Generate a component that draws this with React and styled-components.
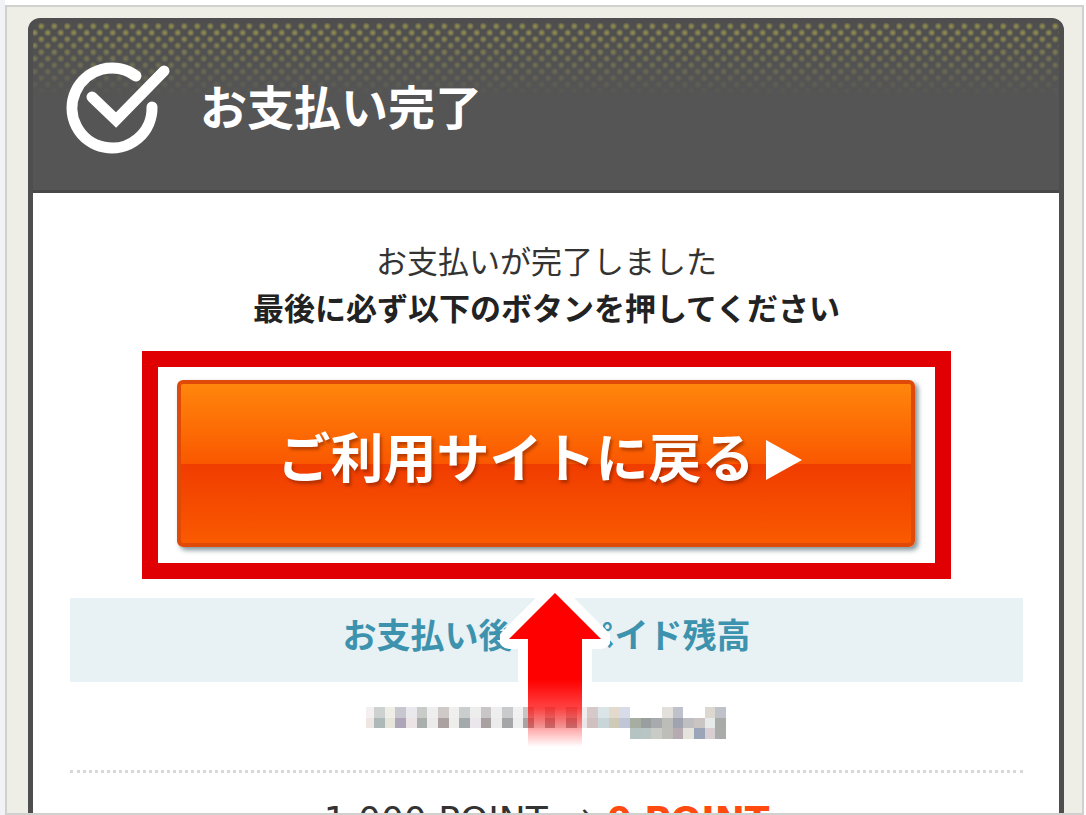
import React from 'react';
import styled, { createGlobalStyle } from 'styled-components';

const GlobalStyle = createGlobalStyle`
  * {
    box-sizing: border-box;
  }
  html {
    height: 100%;
  }
  body {
    margin: 0;
    height: 100%;
    background: #fff;
    font-family: "Liberation Sans", "Noto Sans CJK JP", sans-serif;
  }
  #root {
    height: 100%;
  }
`;

// masked account id, one string per cell row
const MASK_CELL = 11;
const MASK_ROWS = [
  ['#f4f0f0', '#cdd1d0', '#eeeee6', '#c8c6cf', '#e9e9ed', '#c9cbc9', '#eeeeee', '#cfcac8', '#efefee', '#cacecf', '#ededeb', '#c8c6c7', '#eeeeef', '#c9cacc', '#f1f1f1', '#c9c5c5', '#efefef', '#c9c5c5', '#efefef', '#c9c5c5', '#f1eded', '#d6c9c9', '#dbe5e8', '#e3dacd', '#d8dce8', '', '', '', '#e3e0dc', '#bfc2cb', '', '', '#dcd8d0', '#bfc2c8'],
  ['#efe5e2', '#adb8b8', '#e5e5da', '#aca6b8', '#ece3e4', '#a9afac', '#ebebeb', '#aaa1a0', '#ededec', '#a4a9ab', '#eae6ec', '#a9a0a1', '#ebebec', '#a5a6a8', '#eeeeee', '#a9a3a3', '#ebebeb', '#a9a3a3', '#ebebeb', '#a9a3a3', '#ece6e6', '#d1c0c0', '#c8d6d9', '#cfc9b8', '#c0c5d8', '#a6aea2', '#999e9e', '#a8abae', '#bcbcb8', '#a0a4b0', '#bfbfc1', '#cac4c2', '#e6eaea', '#a9aba9'],
  ['', '', '', '', '', '', '', '', '', '', '', '', '', '', '', '', '', '', '', '', '', '', '', '', '', '#b5c3c2', '#b9c5c3', '#c9cbc6', '#bebdb8', '#b6abb0', '#e4e4dd', '#9ba5b8', '#d9cfd2', '#aaaca9'],
];

function CheckIcon() {
  return (
    <svg width="108" height="96" viewBox="0 0 108 96" fill="none" stroke="#fff" strokeWidth="11" strokeLinecap="round">
      <path d="M73 17A40 40 0 1 0 89 48" />
      <path d="M29 38L53 61L101 12" strokeLinejoin="miter" />
    </svg>
  );
}

function PointerArrow() {
  return (
    <svg width="110" height="166" viewBox="0 0 110 166">
      <defs>
        <linearGradient id="arrowFade" x1="0" y1="0" x2="0" y2="160" gradientUnits="userSpaceOnUse">
          <stop offset="0.58" stopColor="#f00" />
          <stop offset="0.75" stopColor="#f00" stopOpacity="0.75" />
          <stop offset="1" stopColor="#f00" stopOpacity="0" />
        </linearGradient>
      </defs>
      <path d="M55 6L101 52H82V94H28V52H9Z" fill="#fff" stroke="#fff" strokeWidth="20" strokeLinejoin="round" />
      <path d="M55 6L101 52H82V160H28V52H9Z" fill="url(#arrowFade)" />
    </svg>
  );
}

function MaskedId() {
  return (
    <svg width="362" height="32" viewBox="5 0 369 33" role="img" aria-label="masked id" shapeRendering="crispEdges">
      {MASK_ROWS.map((row, y) =>
        row.map((color, x) =>
          color && (
            <rect key={`${x}-${y}`} x={x * MASK_CELL} y={y * MASK_CELL} width={MASK_CELL} height={MASK_CELL} fill={color} />
          )
        )
      )}
    </svg>
  );
}

function App() {
  return (
    <>
      <GlobalStyle />
      <Page>
        <Frame>
          <Panel>
            <Header>
              <CheckIcon />
              <Title>お支払い完了</Title>
            </Header>
            <Content>
              <Message>
                お支払いが完了しました
                <strong>最後に必ず以下のボタンを押してください</strong>
              </Message>
              <Highlight>
                <ReturnButton type="button">
                  ご利用サイトに戻る
                  <svg width="38" height="42" viewBox="0 0 38 42">
                    <path d="M1 1L37 21L1 41Z" fill="#fff" />
                  </svg>
                </ReturnButton>
                <Pointer>
                  <PointerArrow />
                </Pointer>
              </Highlight>
              <Balance>
                <BalanceTitle>お支払い後プリペイド残高</BalanceTitle>
                <BalanceId>
                  <MaskedId />
                </BalanceId>
                <BalancePoints>
                  1,000 POINT <span>→</span> <b>0 POINT</b>
                </BalancePoints>
              </Balance>
            </Content>
          </Panel>
        </Frame>
      </Page>
    </>
  );
}

const Page = styled.div`
  height: 100%;
  padding: 5px 2px 0 5px;
  background: linear-gradient(to right, #f1f2f5 5px, #fff 5px);
`;

const Frame = styled.div`
  height: 100%;
  padding: 11px 18px 0 21px;
  overflow: hidden;
  border: 2px solid #d0d1cf;
  background: #eeeee6;
`;

const Panel = styled.main`
  border: 5px solid #4e4e4e;
  border-radius: 12px 12px 0 0;
  background: #fff;
`;

const Header = styled.header`
  display: flex;
  align-items: center;
  gap: 29px;
  height: 170px;
  padding: 0 30px;
  border-bottom: 3px solid #484848;
  background:
    linear-gradient(to bottom, transparent 10px, #555 72px),
    radial-gradient(circle at 25% 25%, #8b8750 1px, transparent 4px) 5px 0 / 13px 13px,
    radial-gradient(circle at 75% 75%, #8b8750 1px, transparent 4px) 5px 0 / 13px 13px,
    #4f4f4f;
`;

const Title = styled.h1`
  margin: 0;
  padding-top: 5px;
  color: #fff;
  font-size: 47px;
  line-height: 56px;
  font-weight: 700;
`;

const Content = styled.div`
  padding: 46px 36px 0 37px;
`;

const Message = styled.p`
  margin: 0;
  color: #333;
  font-size: 31px;
  line-height: 47px;
  text-align: center;
  strong {
    display: block;
    color: #222;
    font-weight: 700;
  }
`;

const Highlight = styled.div`
  position: relative;
  margin: 18px 72px 19px;
  padding: 13px 20px 16px 19px;
  border: 16px solid #e00004;
`;

const ReturnButton = styled.button`
  display: flex;
  align-items: center;
  justify-content: center;
  gap: 10px;
  width: 100%;
  height: 167px;
  padding: 0 12px 8px 0;
  border: 4px solid #e04a08;
  border-radius: 6px;
  background: linear-gradient(#ff860c, #fa5800 50%, #f03c00 50%, #fa5a00);
  box-shadow: 3px 3px 5px rgba(40, 70, 80, 0.6);
  color: #fff;
  font-family: inherit;
  font-size: 53px;
  line-height: 64px;
  font-weight: 700;
  text-shadow: 2px 3px 3px rgba(120, 30, 0, 0.5);
`;

const Pointer = styled.div`
  position: absolute;
  z-index: 1;
  top: 100%;
  left: 50%;
  margin: 24px 0 0 -47px;
  pointer-events: none;
`;

const Balance = styled.section`
  text-align: center;
`;

const BalanceTitle = styled.h2`
  height: 84px;
  margin: 0;
  padding-top: 12px;
  background: #e8f1f4;
  color: #3d93ae;
  font-size: 34px;
  line-height: 52px;
  font-weight: 700;
`;

const BalanceId = styled.div`
  display: flex;
  justify-content: center;
  height: 91px;
  padding-top: 25px;
  border-bottom: 3px dotted #d8d8d8;
`;

const BalancePoints = styled.p`
  margin: 0;
  padding-top: 20px;
  color: #333;
  font-family: "DejaVu Sans", "Noto Sans CJK JP", sans-serif;
  font-size: 36px;
  line-height: 47px;
  span {
    font-family: "Noto Sans CJK JP", sans-serif;
  }
  b {
    color: #ff4a10;
  }
`;

export default App;
